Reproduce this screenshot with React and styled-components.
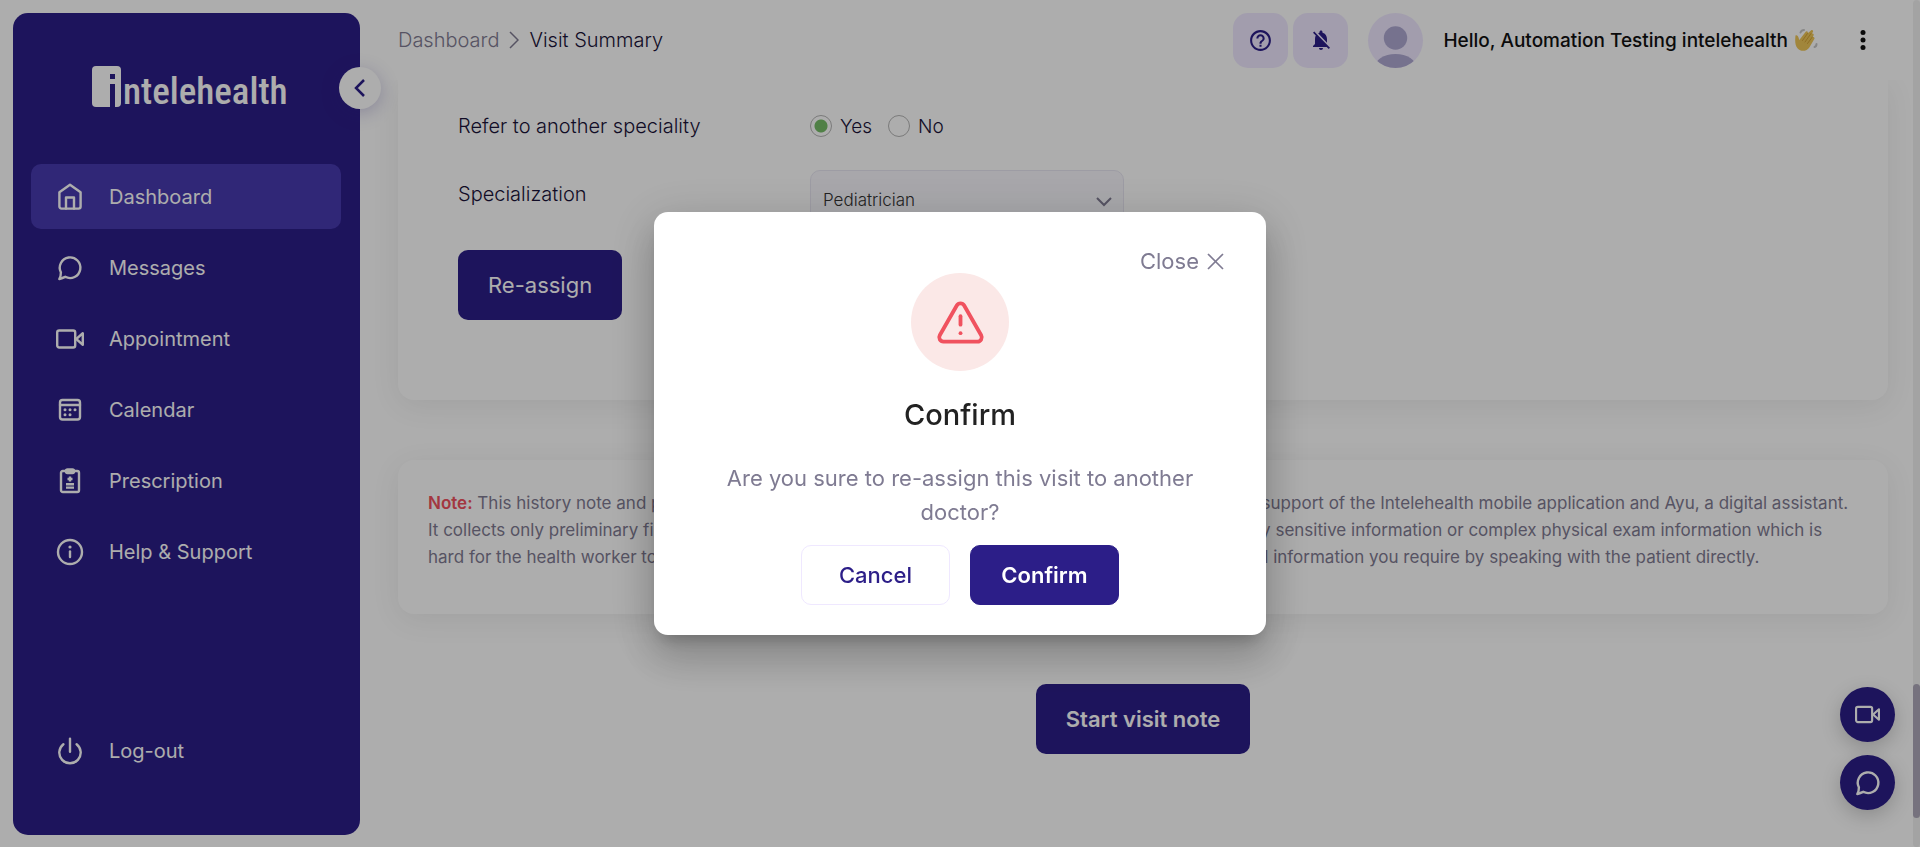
import React from "react";
import styled, { createGlobalStyle, css } from "styled-components";
import { MdHelpOutline, MdNotificationsOff } from "react-icons/md";
import { TriangleAlert } from "lucide-react";

const navy = "#2c1e88";
const ink = "#1a1338";
const muted = "#7f7b92";

const GlobalStyle = createGlobalStyle`
  *, *::before, *::after { box-sizing: border-box; }
  body {
    margin: 0;
    background: #fff;
    color: ${ink};
    font-family: Inter, "Noto Sans", sans-serif;
    font-size: 20px;
    font-weight: 300;
  }
  button, select, input { font: inherit; margin: 0; }
  p, h2, ul, ol { margin: 0; padding: 0; }
  ul, ol { list-style: none; }
  svg { display: block; flex: none; }
`;

const Page = styled.div`
  display: flex;
  min-height: 100vh;
  padding-left: 13px;
`;

/* Sidebar */
const Sidebar = styled.aside`
  position: sticky;
  top: 13px;
  z-index: 3;
  display: flex;
  flex-direction: column;
  flex: none;
  width: 347px;
  height: calc(100vh - 25px);
  margin-top: 13px;
  padding: 53px 19px 52px 18px;
  border-radius: 15px;
  background: ${navy};
`;

const Logo = styled.div`
  display: flex;
  align-items: flex-end;
  gap: 2px;
  height: 41px;
  margin: 0 0 57px 61px;
  color: #fff;
`;

const LogoText = styled.span`
  font-family: "Liberation Sans Narrow", "Roboto Condensed", sans-serif;
  font-size: 37px;
  line-height: 30px;
  font-weight: 500;
`;

const CollapseButton = styled.button`
  position: absolute;
  top: 54px;
  right: -21px;
  display: grid;
  place-items: center;
  width: 42px;
  height: 42px;
  padding: 0;
  border: 0;
  border-radius: 50%;
  background: #fff;
  color: ${navy};
  box-shadow: 0 4px 18px rgba(44, 30, 136, 0.25);
`;

const Nav = styled.nav`
  display: flex;
  flex: 1;
  flex-direction: column;
  justify-content: space-between;
`;

const NavList = styled.ul`
  display: flex;
  flex-direction: column;
  gap: 6px;
`;

const NavLink = styled.a`
  display: flex;
  align-items: center;
  gap: 25px;
  height: 65px;
  padding-left: 25px;
  border-radius: 10px;
  color: #fff;
  font-weight: 400;
  text-decoration: none;
  ${(p) => p.$active && css`background: #483ab0;`}
`;

/* Main column */
const Main = styled.div`
  flex: 1;
  min-width: 0;
  padding-right: 7px;
`;

const Header = styled.header`
  position: sticky;
  top: 0;
  z-index: 2;
  display: flex;
  align-items: center;
  justify-content: space-between;
  height: 80px;
  padding: 0 25px 0 38px;
  background: #fff;
`;

const Crumbs = styled.ol`
  display: flex;
  align-items: center;
  gap: 10px;
  color: ${ink};
  a { color: ${muted}; text-decoration: none; }
`;

const UserBar = styled.div`
  display: flex;
  align-items: center;
`;

const IconButton = styled.button`
  display: grid;
  place-items: center;
  width: 55px;
  height: 55px;
  margin-right: 5px;
  padding: 0;
  border: 0;
  border-radius: 15px;
  background: #efe8ff;
  color: ${navy};
`;

const Avatar = styled.svg`
  margin: 0 20px 0 15px;
  border-radius: 50%;
  background: #efe8ff;
`;

const Greeting = styled.span`
  display: flex;
  align-items: center;
  gap: 6px;
  color: #111;
  font-size: 19px;
  font-weight: 500;
  white-space: nowrap;
`;

const MenuButton = styled.button`
  display: grid;
  place-items: center;
  width: 50px;
  height: 50px;
  margin-left: 20px;
  padding: 0;
  border: 0;
  background: none;
  color: #111;
`;

const Content = styled.main`
  display: flex;
  flex-direction: column;
  align-items: stretch;
  padding: 0 25px 90px 38px;
`;

const Card = styled.section`
  border-radius: ${(p) => (p.$continued ? "0 0 16px 16px" : "16px")};
  background: #fff;
  box-shadow: 0 6px 30px rgba(0, 0, 0, 0.07);
`;

const ReferCard = styled(Card)`
  display: flex;
  flex-direction: column;
  align-items: flex-start;
  padding: 30px 60px 80px;
`;

const FormRow = styled.div`
  display: grid;
  grid-template-columns: 352px 314px;
  margin-bottom: ${(p) => p.$gap}px;
`;

const FieldLabel = styled.span`
  line-height: ${(p) => p.$line}px;
`;

const Choices = styled.div`
  display: flex;
  align-items: center;
  gap: 16px;
  font-size: 19px;
`;

const Choice = styled.label`
  display: flex;
  align-items: center;
  gap: 8px;
`;

const Radio = styled.input.attrs({ type: "radio" })`
  appearance: none;
  width: 22px;
  height: 22px;
  border: 1px solid #b5b5b5;
  border-radius: 50%;
  &:checked {
    background: radial-gradient(circle, #77bd68 0 6px, #fff 7px);
  }
`;

const SelectBox = styled.div`
  display: grid;
  align-items: center;
  > * { grid-area: 1 / 1; }
  > svg { justify-self: end; margin: 4px 12px 0 0; pointer-events: none; }
`;

const Select = styled.select`
  appearance: none;
  width: 100%;
  height: 60px;
  padding: 0 12px;
  border: 1px solid #e8e6f2;
  border-radius: 10px;
  background: #f8f7fc;
  color: #333;
  font-size: 17px;
`;

const PrimaryButton = styled.button`
  height: 70px;
  padding: 0 30px;
  border: 0;
  border-radius: 10px;
  background: ${navy};
  color: #fff;
  font-size: 22px;
  font-weight: ${(p) => (p.$strong ? 600 : 400)};
`;

const StartButton = styled(PrimaryButton)`
  align-self: center;
  margin-top: 70px;
`;

const NoteCard = styled(Card)`
  margin-top: 60px;
  padding: 30px 30px 43px;
  color: ${muted};
  font-size: 17px;
  font-weight: 400;
  line-height: 27px;
  strong { color: #f0525f; font-weight: 600; }
`;

const NoteLine = styled.span`
  display: block;
  white-space: nowrap;
`;

/* Floating controls */
const FabStack = styled.div`
  position: fixed;
  right: 25px;
  bottom: 37px;
  z-index: 3;
  display: flex;
  flex-direction: column;
  gap: 13px;
`;

const Fab = styled.button`
  display: grid;
  place-items: center;
  width: 55px;
  height: 55px;
  padding: 0;
  border: 0;
  border-radius: 50%;
  background: ${navy};
  color: #fff;
  box-shadow: 0 6px 20px rgba(0, 0, 0, 0.2);
`;

const ScrollTrack = styled.div`
  position: fixed;
  inset: 0 0 0 auto;
  z-index: 3;
  display: flex;
  flex-direction: column;
  justify-content: flex-end;
  width: 7px;
  padding-bottom: 29px;
  border-radius: 4px;
  background: #f1f1f1;
`;

const ScrollThumb = styled.div`
  height: 134px;
  border-radius: 4px;
  background: #aea9ba;
`;

/* Confirmation dialog */
const Scrim = styled.div`
  position: fixed;
  inset: 0;
  z-index: 10;
  display: flex;
  align-items: center;
  justify-content: center;
  background: rgba(0, 0, 0, 0.32);
`;

const Dialog = styled.div`
  display: flex;
  flex-direction: column;
  align-items: center;
  width: 612px;
  max-width: 100%;
  padding: 37px 42px 30px;
  border-radius: 14px;
  background: #fff;
  color: ${muted};
  font-size: 22px;
  text-align: center;
  box-shadow: 0 11px 15px -7px rgba(0, 0, 0, 0.2),
    0 24px 38px 3px rgba(0, 0, 0, 0.14), 0 9px 46px 8px rgba(0, 0, 0, 0.12);
`;

const CloseButton = styled.button`
  display: flex;
  align-items: center;
  align-self: flex-end;
  gap: 8px;
  height: 24px;
  padding: 0;
  border: 0;
  background: none;
  color: ${muted};
  font-size: 22px;
  font-weight: 400;
`;

const AlertDisc = styled.div`
  display: grid;
  place-items: center;
  width: 98px;
  height: 98px;
  border-radius: 50%;
  background: #fbe8e7;
  color: #f0525f;
`;

const DialogTitle = styled.h2`
  margin-top: 26px;
  color: #222;
  font-size: 29px;
  font-weight: 500;
  line-height: 36px;
`;

const DialogText = styled.p`
  margin-top: 28px;
  font-weight: 400;
  line-height: 34px;
`;

const DialogActions = styled.div`
  display: flex;
  gap: 20px;
  margin-top: 16px;
`;

const DialogButton = styled.button`
  width: 149px;
  height: 60px;
  padding: 0;
  border: 1px solid ${(p) => (p.$primary ? navy : "#efe8ff")};
  border-radius: 10px;
  background: ${(p) => (p.$primary ? navy : "#fff")};
  color: ${(p) => (p.$primary ? "#fff" : navy)};
  font-weight: ${(p) => (p.$primary ? 600 : 500)};
`;

/* Icons */
const Line = ({ size = 28, children }) => (
  <svg width={size} height={size} viewBox="0 0 28 28" fill="none" stroke="currentColor"
    strokeWidth="2.4" strokeLinecap="round" strokeLinejoin="round" aria-hidden="true">
    {children}
  </svg>
);

const HomeIcon = () => (
  <Line>
    <path d="M3.4 9.2 14 1.8l10.6 7.4v14.4a2 2 0 0 1-2 2H5.4a2 2 0 0 1-2-2Z" />
    <path d="M10 25.500v-11h8v11" />
  </Line>
);

const ChatIcon = ({ size }) => (
  <Line size={size}>
    <path d="M9.200 22.800A10.300 10.300 0 1 0 4.900 18.400Q5 22 3.300 25 6.500 24 9.200 22.800Z" />
  </Line>
);

const VideoIcon = ({ size }) => (
  <Line size={size}>
    <rect x="1.200" y="5.500" width="18" height="17" rx="2" />
    <path d="M20.300 14l6.500-5.800v11.600Z" />
  </Line>
);

const CalendarIcon = () => (
  <Line>
    <rect x="4" y="4" width="20" height="19.500" rx="2.500" />
    <path d="M4 9h20" />
    <g fill="currentColor" stroke="none">
      <circle cx="9" cy="13.700" r="1.500" />
      <circle cx="14" cy="13.700" r="1.500" />
      <circle cx="19" cy="13.700" r="1.500" />
      <circle cx="9" cy="18.700" r="1.500" />
      <circle cx="14" cy="18.700" r="1.500" />
    </g>
  </Line>
);

const PrescriptionIcon = () => (
  <Line>
    <rect x="5" y="4" width="18" height="21" rx="1.800" />
    <rect x="10" y="2.500" width="8" height="3.500" rx="1.500" />
    <path d="M14 9.500v5M11.500 12h5M10 17.200h8M10 20.600h8" strokeLinecap="butt" />
  </Line>
);

const InfoIcon = () => (
  <Line>
    <circle cx="14" cy="14" r="12" />
    <path d="M14 13.500v5.500" />
    <circle cx="14" cy="9" r="1.600" fill="currentColor" stroke="none" />
  </Line>
);

const PowerIcon = () => (
  <Line>
    <path d="M14 1.800v13" />
    <path d="M7.400 7.200a10.700 10.700 0 1 0 13.200 0" />
  </Line>
);

const WaveIcon = () => (
  <svg width="24" height="24" viewBox="0 0 24 24" fill="none" strokeLinecap="round" aria-hidden="true">
    <path d="M6.500 4.500Q7.500 2 10 2M20.500 19Q22.500 18.500 22.500 16" stroke="#c6c6c6" strokeWidth="2" />
    <path d="M1.500 7.500c1.200-1 2.700.3 3 2l.8 2.500L11.500 4c1.300-1.600 3 .1 2.200 1.300L17 2.400c1.400-1 2.700.6 1.800 1.800l-1.200 1.600c1.400-.9 2.700.6 1.900 1.800l-1 1.600c1.500-.8 2.500.7 1.800 1.900l-4.800 8.100C13 23.300 7 24.300 3.700 20.500.7 17 1 12 1.500 7.500Z" fill="#eec658" />
    <path d="m8.500 12.500 5-7M11 14l6-8.500M13.500 15.500l4.800-6.500" stroke="#d3a236" strokeWidth="1" />
  </svg>
);

const navItems = [
  ["Dashboard", HomeIcon],
  ["Messages", ChatIcon],
  ["Appointment", VideoIcon],
  ["Calendar", CalendarIcon],
  ["Prescription", PrescriptionIcon],
  ["Help & Support", InfoIcon],
];

export default function App() {
  return (
    <>
      <GlobalStyle />
      <Page>
        <Sidebar>
          <Logo>
            <svg width="29" height="41" viewBox="0 0 29 41" aria-hidden="true">
              <rect width="29" height="41" rx="4" fill="currentColor" />
              <path d="M18 8h5v5h-5zM18 18h5v23h-5z" fill={navy} />
            </svg>
            <LogoText aria-label="intelehealth">ntelehealth</LogoText>
          </Logo>
          <CollapseButton aria-label="Collapse menu">
            <svg width="12" height="18" viewBox="0 0 12 18" fill="none" stroke="currentColor" strokeWidth="2.500">
              <path d="M10 1 2 9l8 8" />
            </svg>
          </CollapseButton>
          <Nav>
            <NavList>
              {navItems.map(([label, Icon], i) => (
                <li key={label}>
                  <NavLink href="#" $active={i === 0}>
                    <Icon />
                    {label}
                  </NavLink>
                </li>
              ))}
            </NavList>
            <NavLink href="#">
              <PowerIcon />
              Log-out
            </NavLink>
          </Nav>
        </Sidebar>

        <Main>
          <Header>
            <Crumbs>
              <li><a href="#">Dashboard</a></li>
              <li aria-hidden="true">
                <svg width="10" height="18" viewBox="0 0 10 18" fill="none" stroke={muted} strokeWidth="1.500">
                  <path d="m1 1 8 8-8 8" />
                </svg>
              </li>
              <li>Visit Summary</li>
            </Crumbs>
            <UserBar>
              <IconButton aria-label="Help"><MdHelpOutline size={25} /></IconButton>
              <IconButton aria-label="Notifications off"><MdNotificationsOff size={24} /></IconButton>
              <Avatar width="55" height="55" viewBox="0 0 55 55" fill="#aea8d2" aria-hidden="true">
                <circle cx="27.500" cy="25" r="11.700" />
                <ellipse cx="27.500" cy="55" rx="21" ry="14" />
              </Avatar>
              <Greeting>Hello, Automation Testing intelehealth <WaveIcon /></Greeting>
              <MenuButton aria-label="More options">
                <svg width="6" height="20" viewBox="0 0 6 20" fill="currentColor">
                  <circle cx="3" cy="2.500" r="2.500" />
                  <circle cx="3" cy="10" r="2.500" />
                  <circle cx="3" cy="17.500" r="2.500" />
                </svg>
              </MenuButton>
            </UserBar>
          </Header>

          <Content>
            <ReferCard $continued>
              <FormRow $gap={28}>
                <FieldLabel $line={32}>Refer to another speciality</FieldLabel>
                <Choices>
                  <Choice><Radio name="refer" defaultChecked />Yes</Choice>
                  <Choice><Radio name="refer" />No</Choice>
                </Choices>
              </FormRow>
              <FormRow $gap={20}>
                <FieldLabel as="label" htmlFor="specialization" $line={48}>Specialization</FieldLabel>
                <SelectBox>
                  <Select id="specialization"><option>Pediatrician</option></Select>
                  <svg width="16" height="10" viewBox="0 0 16 10" fill="none" stroke={muted} strokeWidth="2">
                    <path d="m1 1 7 7 7-7" />
                  </svg>
                </SelectBox>
              </FormRow>
              <PrimaryButton>Re-assign</PrimaryButton>
            </ReferCard>

            <NoteCard>
              <NoteLine><strong>Note:</strong> This history note and physical exam was collected by a field health worker with the guidance and support of the Intelehealth mobile application and Ayu, a digital assistant.</NoteLine>
              <NoteLine>It collects only preliminary findings from the patient, and the health worker does not generally collect any sensitive information or complex physical exam information which is</NoteLine>
              <NoteLine>hard for the health worker to perform. Please confirm the summarized findings and collect any additional information you require by speaking with the patient directly.</NoteLine>
            </NoteCard>

            <StartButton $strong>Start visit note</StartButton>
          </Content>
        </Main>
      </Page>

      <FabStack>
        <Fab aria-label="Start video call"><VideoIcon size={25} /></Fab>
        <Fab aria-label="Open chat"><ChatIcon size={28} /></Fab>
      </FabStack>
      <ScrollTrack><ScrollThumb /></ScrollTrack>

      <Scrim>
        <Dialog role="dialog" aria-modal="true" aria-labelledby="dialog-title">
          <CloseButton>
            Close
            <svg width="17" height="17" viewBox="0 0 17 17" fill="none" stroke="currentColor" strokeWidth="1.700">
              <path d="m1 1 15 15M16 1 1 16" />
            </svg>
          </CloseButton>
          <AlertDisc><TriangleAlert size={51} strokeWidth={1.8} /></AlertDisc>
          <DialogTitle id="dialog-title">Confirm</DialogTitle>
          <DialogText>Are you sure to re-assign this visit to another doctor?</DialogText>
          <DialogActions>
            <DialogButton>Cancel</DialogButton>
            <DialogButton $primary>Confirm</DialogButton>
          </DialogActions>
        </Dialog>
      </Scrim>
    </>
  );
}
